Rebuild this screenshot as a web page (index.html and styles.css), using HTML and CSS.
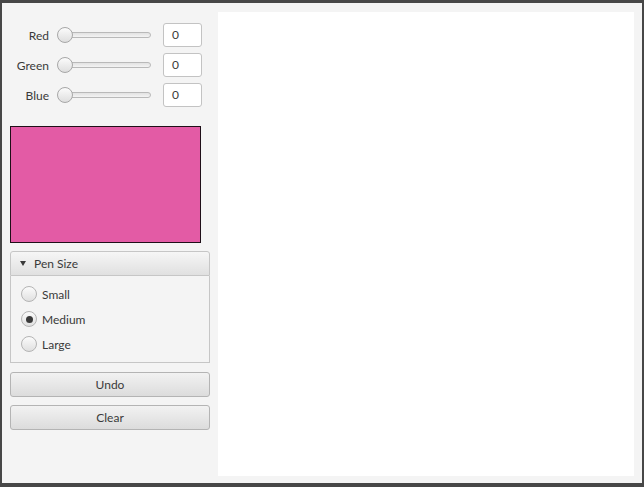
FILE: index.html
```html
<!DOCTYPE html>
<html>
<head>
<meta charset="utf-8">
<link rel="stylesheet" href="styles.css">
</head>
<body>
<div class="app">
  <div class="side">
    <div class="sliders">
      <span class="lbl">Red</span>
      <div class="slider"><div class="track"></div><div class="thumb"></div></div>
      <div class="field">0</div>
      <span class="lbl">Green</span>
      <div class="slider"><div class="track"></div><div class="thumb"></div></div>
      <div class="field">0</div>
      <span class="lbl">Blue</span>
      <div class="slider"><div class="track"></div><div class="thumb"></div></div>
      <div class="field">0</div>
    </div>
    <div class="swatch"></div>
    <div class="pane">
      <div class="pane-head"><span class="arrow"></span>Pen Size</div>
      <div class="pane-body">
        <div class="radio-row"><span class="radio"></span>Small</div>
        <div class="radio-row"><span class="radio on"></span>Medium</div>
        <div class="radio-row"><span class="radio"></span>Large</div>
      </div>
    </div>
    <div class="btn btn-undo">Undo</div>
    <div class="btn btn-clear">Clear</div>
  </div>
  <div class="canvas"></div>
</div>
</body>
</html>
```
FILE: styles.css
```css
* { box-sizing: border-box; }
html, body { margin: 0; padding: 0; }
body {
  background: #474747;
  width: 644px;
  height: 487px;
  padding: 3px 2px 4px 2px;
  font-family: Lato, "Open Sans", sans-serif;
  font-size: 12px;
  color: #3a3a3a;
}
.app {
  width: 640px;
  height: 480px;
  background: #f4f4f4;
  display: flex;
  padding: 9px 8px 7px 0;
}
.side {
  width: 216px;
  padding: 11px 8px 0 8px;
  display: flex;
  flex-direction: column;
}
.sliders {
  display: grid;
  grid-template-columns: 39px 114px 39px;
  row-gap: 6px;
  grid-auto-rows: 24px;
  align-items: center;
}
.lbl {
  text-align: right;
}
.slider {
  position: relative;
  width: 94px;
  height: 24px;
  margin-left: 8px;
}
.track {
  position: absolute;
  left: 3px;
  right: 0;
  top: 9px;
  height: 6px;
  border: 1px solid #b9b9b9;
  border-radius: 3px;
  background: linear-gradient(#e2e2e2, #f4f4f4);
}
.thumb {
  position: absolute;
  left: 0;
  top: 4px;
  width: 16px;
  height: 16px;
  border-radius: 50%;
  border: 1px solid #a7a7a7;
  background: linear-gradient(#fbfbfb, #dedede);
}
.field {
  height: 24px;
  width: 39px;
  background: #fff;
  border: 1px solid #c3c3c3;
  border-radius: 3px;
  padding: 0 0 0 8px;
  line-height: 22px;
}
.swatch {
  margin-top: 19px;
  width: 191px;
  height: 117px;
  background: #e35ba5;
  border: 1px solid #1f0f18;
}
.pane {
  margin-top: 8px;
  width: 200px;
}
.pane-head {
  height: 25px;
  border: 1px solid #c6c6c6;
  border-radius: 3px 3px 0 0;
  background: linear-gradient(#f6f6f6, #e0e0e0);
  display: flex;
  align-items: center;
  padding-left: 9px;
}
.arrow {
  width: 0;
  height: 0;
  border-left: 3.5px solid transparent;
  border-right: 3.5px solid transparent;
  border-top: 5px solid #3a3a3a;
  margin-right: 8px;
}
.pane-body {
  height: 87px;
  border: 1px solid #c6c6c6;
  border-top: none;
  background: #f4f4f4;
  padding: 10px 0 0 10px;
  display: flex;
  flex-direction: column;
  gap: 9px;
}
.radio-row {
  display: flex;
  align-items: center;
  height: 16px;
}
.radio {
  width: 16px;
  height: 16px;
  border-radius: 50%;
  border: 1px solid #b4b4b4;
  background: linear-gradient(#fbfbfb, #e0e0e0);
  margin-right: 5px;
  display: flex;
  align-items: center;
  justify-content: center;
}
.radio.on::after {
  content: "";
  width: 7px;
  height: 7px;
  border-radius: 50%;
  background: #3a3a3a;
}
.btn {
  width: 200px;
  height: 25px;
  border: 1px solid #b4b4b4;
  border-radius: 3px;
  background: linear-gradient(#f2f2f2, #dcdcdc);
  display: flex;
  align-items: center;
  justify-content: center;
}
.btn-undo { margin-top: 9px; }
.btn-clear { margin-top: 8px; }
.canvas {
  width: 416px;
  height: 464px;
  background: #fff;
}
```
